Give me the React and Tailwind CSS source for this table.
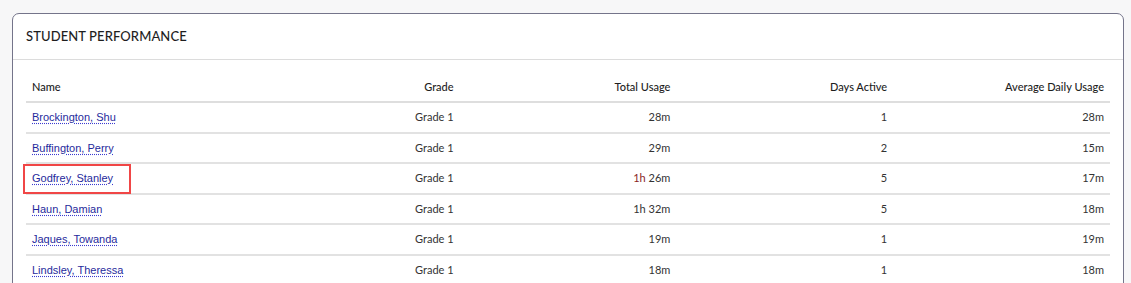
import React from "react";

const rows = [
  { name: "Brockington, Shu", grade: "Grade 1", total: "28m", days: "1", avg: "28m" },
  { name: "Buffington, Perry", grade: "Grade 1", total: "29m", days: "2", avg: "15m" },
  { name: "Godfrey, Stanley", grade: "Grade 1", total: "1h 26m", red: true, days: "5", avg: "17m", boxed: true },
  { name: "Haun, Damian", grade: "Grade 1", total: "1h 32m", days: "5", avg: "18m" },
  { name: "Jaques, Towanda", grade: "Grade 1", total: "19m", days: "1", avg: "19m" },
  { name: "Lindsley, Theressa", grade: "Grade 1", total: "18m", days: "1", avg: "18m" },
];

export default function App() {
  return (
    <div className="w-[1131px] h-[283px] overflow-hidden bg-[#f7f7f8] pt-[13px] pl-[12px] pr-[7px]" style={{ fontFamily: "Lato, 'Open Sans', sans-serif" }}>
      <div className="bg-white border border-[#74748a] rounded-[7px] h-[300px]">
        <div className="h-[46px] flex items-center px-[13px] border-b border-[#dcdcdc]">
          <h2 className="text-[13px] font-medium text-[#1e1e1e] tracking-[0.1px]">STUDENT PERFORMANCE</h2>
        </div>
        <div className="px-[13px] pt-[13px]">
          <table className="w-full table-fixed border-collapse text-[11px] text-[#333]">
            <thead>
              <tr className="border-b-2 border-[#dedede] h-[29px]">
                <th className="text-left font-medium text-[#1e1e1e] px-[6px]">Name</th>
                <th className="text-right font-medium text-[#1e1e1e] px-[6px]">Grade</th>
                <th className="text-right font-medium text-[#1e1e1e] px-[6px]">Total Usage</th>
                <th className="text-right font-medium text-[#1e1e1e] px-[6px]">Days Active</th>
                <th className="text-right font-medium text-[#1e1e1e] px-[6px]">Average Daily Usage</th>
              </tr>
            </thead>
            <tbody>
              {rows.map((r) => (
                <tr key={r.name} className="border-b-2 border-[#e2e2e2] h-[30.6px]">
                  <td className="px-[6px] relative">
                    <span
                      className="text-[#1f2a9c] underline decoration-dotted decoration-[#3b3bd0] underline-offset-[2px]"
                      style={{ fontFamily: "'Liberation Sans', Arial, sans-serif" }}
                    >
                      {r.name}
                    </span>
                    {r.boxed && (
                      <span className="absolute left-[-3px] top-[0px] w-[108px] h-[30px] border-2 border-[#f04646] pointer-events-none" />
                    )}
                  </td>
                  <td className="px-[6px] text-right">{r.grade}</td>
                  <td className="px-[6px] text-right">
                    {r.red ? (
                      <>
                        <span className="text-[#8a1f1f]">1h</span> 26m
                      </>
                    ) : (
                      r.total
                    )}
                  </td>
                  <td className="px-[6px] text-right">{r.days}</td>
                  <td className="px-[6px] text-right">{r.avg}</td>
                </tr>
              ))}
            </tbody>
          </table>
        </div>
      </div>
    </div>
  );
}
